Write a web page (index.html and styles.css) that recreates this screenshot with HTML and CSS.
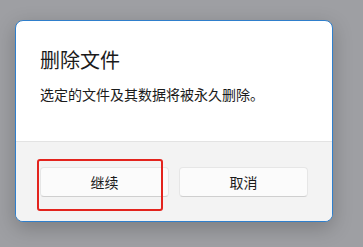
FILE: index.html
```html
<!DOCTYPE html>
<html lang="zh-CN">

<head>
    <meta charset="UTF-8">
    <meta name="viewport" content="width=device-width, initial-scale=1.0">
    <title>删除文件</title>
    <link rel="stylesheet" href="styles.css">
</head>

<body>
    <div class="dialogo">
        <div class="contenido">
            <h1>删除文件</h1>
            <p>选定的文件及其数据将被永久删除。</p>
        </div>
        <div class="pie">
            <button class="boton">继续</button>
            <button class="boton">取消</button>
        </div>
    </div>
    <div class="marca"></div>
</body>

</html>
```
FILE: styles.css
```css
body {
    margin: 0;
    height: 247px;
    background-color: #9e9fa3;
    font-family: "Noto Sans CJK SC", "Noto Sans", sans-serif;
    overflow: hidden;
    padding: 20px 0 0 15px;
    box-sizing: border-box;
}

.dialogo {
    width: 318px;
    height: 202px;
    box-sizing: border-box;
    border: 1px solid #2f7fcc;
    border-radius: 8px;
    background-color: white;
    overflow: hidden;
    display: flex;
    flex-direction: column;
    box-shadow: 0 6px 20px rgba(0, 0, 0, 0.22);
}

.contenido {
    height: 120px;
    box-sizing: border-box;
    padding: 25px 24px 0 24px;
}

.contenido h1 {
    margin: 0;
    font-size: 20px;
    line-height: 28px;
    font-weight: normal;
    color: #1b1b1b;
}

.contenido p {
    margin: 10px 0 0 0;
    font-size: 14px;
    line-height: 20px;
    color: #1b1b1b;
}

.pie {
    flex: 1;
    background-color: #f3f3f3;
    border-top: 1px solid #e3e3e3;
    display: flex;
    gap: 10px;
    padding: 25px 24px 0 24px;
}

.boton {
    width: 129px;
    height: 30px;
    border: 1px solid #e6e6e6;
    border-bottom-color: #cfcfcf;
    border-radius: 4px;
    background-color: #fbfbfb;
    font-family: inherit;
    font-size: 14px;
    color: #1b1b1b;
    padding: 0;
}

.marca {
    position: absolute;
    left: 37px;
    top: 159px;
    width: 126px;
    height: 52px;
    box-sizing: border-box;
    border: 2px solid #e3231d;
    border-radius: 3px;
}
```
